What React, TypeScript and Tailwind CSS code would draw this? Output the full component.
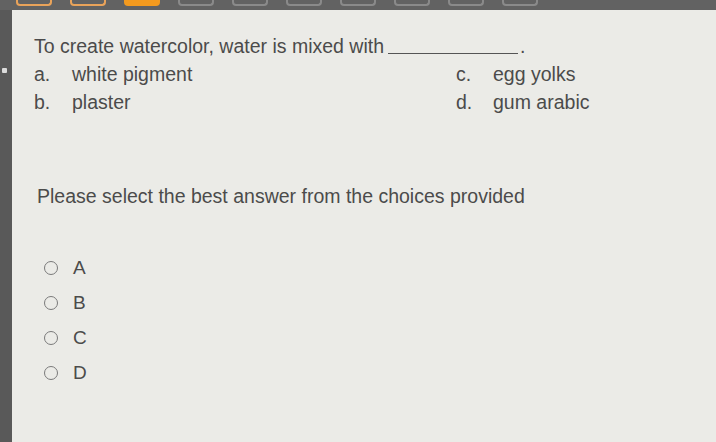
export default function App() {
  const tabs = [0, 1, 2, 3, 4, 5, 6, 7, 8, 9];
  const radios = ["A", "B", "C", "D"];

  return (
    <div
      className="w-[716px] h-[442px] overflow-hidden flex flex-col bg-[#5f5f5f] text-[#4b4b4b]"
      style={{ fontFamily: '"Liberation Sans", Arial, sans-serif' }}
    >
      {/* top tab strip */}
      <div className="h-[10px] shrink-0 flex items-start gap-[18px] pl-[16px] bg-[#626262]">
        {tabs.map((i) => (
          <div
            key={i}
            className={
              i < 2
                ? "w-[36px] h-[6px] rounded-b-[4px] border-2 border-t-0 border-[#e9a35a]"
                : i === 2
                ? "w-[36px] h-[6px] rounded-b-[4px] bg-[#f39a1f]"
                : "w-[36px] h-[6px] rounded-b-[4px] border-2 border-t-0 border-[#8a8a8a]"
            }
          />
        ))}
      </div>

      <div className="flex flex-1">
        {/* left rail */}
        <div className="w-[12px] shrink-0 bg-[#595959] flex flex-col">
          <div className="mt-[58px] ml-[2px] w-[5px] h-[5px] bg-[#dcdcdc] rounded-[1px]" />
        </div>

        {/* page */}
        <div className="flex-1 bg-[#ebebe7] pl-[22px] pt-[24px] text-[19.5px] leading-[24px]">
          <div className="flex items-end">
            <span>To create watercolor, water is mixed with</span>
            <span className="ml-[4px] w-[130px] border-b-[1.5px] border-[#555] mb-[4px]" />
            <span className="ml-[2px]">.</span>
          </div>

          <div className="grid grid-cols-[422px_1fr] mt-[2px] leading-[28px]">
            <div className="flex">
              <span className="w-[38px]">a.</span>
              <span>white pigment</span>
            </div>
            <div className="flex">
              <span className="w-[37px]">c.</span>
              <span>egg yolks</span>
            </div>
            <div className="flex">
              <span className="w-[38px]">b.</span>
              <span>plaster</span>
            </div>
            <div className="flex">
              <span className="w-[37px]">d.</span>
              <span>gum arabic</span>
            </div>
          </div>

          <div className="mt-[68px] pl-[3px]">
            Please select the best answer from the choices provided
          </div>

          <div className="mt-[49px] pl-[10px] flex flex-col gap-[14px]">
            {radios.map((r) => (
              <label key={r} className="flex items-center gap-[15px] h-[21px]">
                <span className="w-[14px] h-[14px] rounded-full border-[1.5px] border-[#7a7a7a]" />
                <span className="text-[19px]">{r}</span>
              </label>
            ))}
          </div>
        </div>
      </div>
    </div>
  );
}
